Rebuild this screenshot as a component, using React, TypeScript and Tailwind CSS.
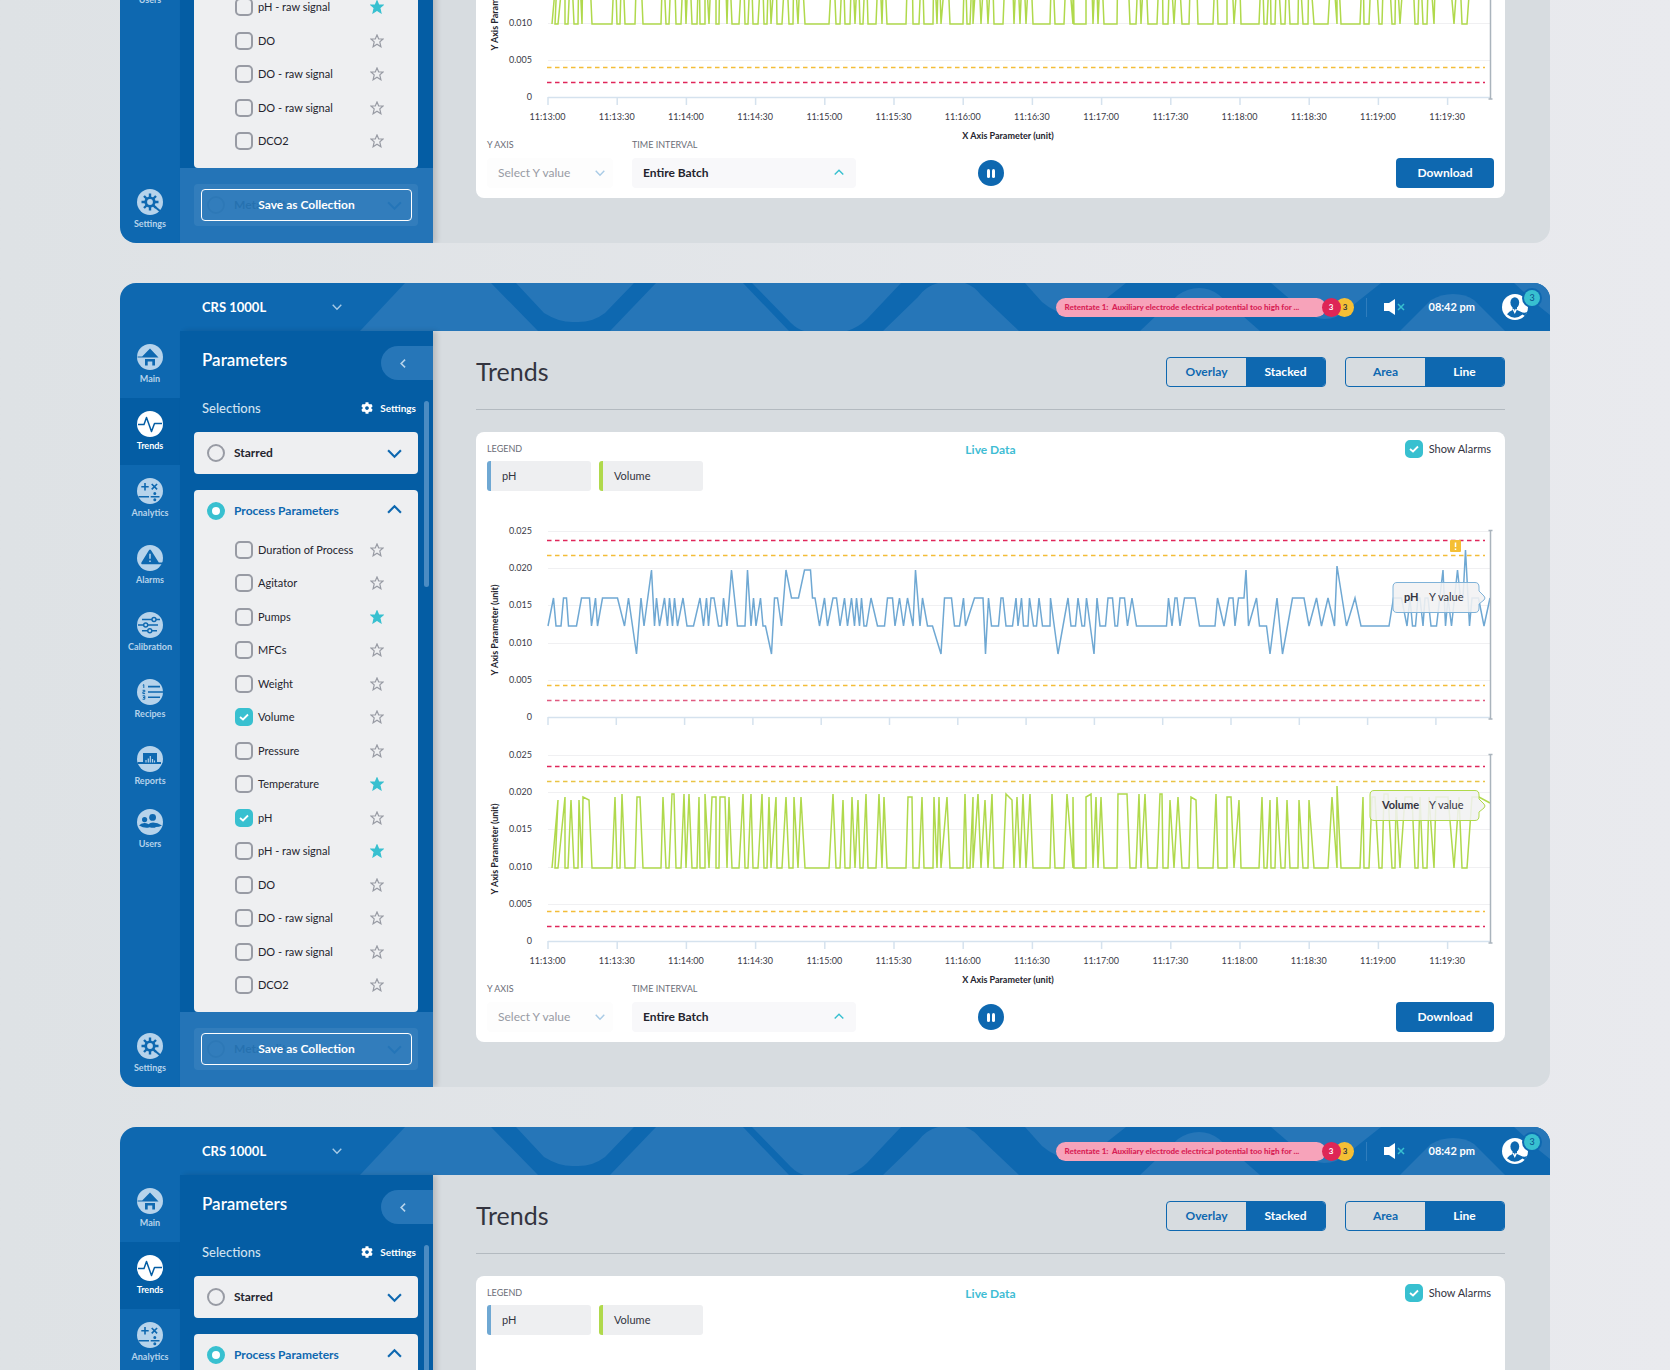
import { useId, useState } from 'react';
import type { ReactNode } from 'react';
import { FaCog } from 'react-icons/fa';

interface NavItem {
  label: string;
  icon: ReactNode;
}

interface ChartProps {
  color: string;
  data: string;
  levels: Record<string, number>;
  limits: { y: number; color: string }[];
  tickGap: number;
  titleY: number;
  labels?: string[];
  children?: ReactNode;
}

const parameters = [
  'Duration of Process',
  'Agitator',
  'Pumps',
  'MFCs',
  'Weight',
  'Volume',
  'Pressure',
  'Temperature',
  'pH',
  'pH - raw signal',
  'DO',
  'DO - raw signal',
  'DO - raw signal',
  'DCO2',
];
const initialChecked = [5, 8];
const initialStarred = [2, 7, 9];

const times = [
  '11:13:00', '11:13:30', '11:14:00', '11:14:30', '11:15:00', '11:15:30', '11:16:00',
  '11:16:30', '11:17:00', '11:17:30', '11:18:00', '11:18:30', '11:19:00', '11:19:30',
];

// Every sample is a level letter followed by its x offset in the plot
const phLevels = { X: 19, S: 35, P: 39, H: 67, L: 95, T: 123 };
const phData =
  'L0 H5.5 L8 L13 H15.5 H18.5 L20.5 L28.5 H33.5 H41.5 L43.5 H47.5 L49.5 H54.5 H69.5 L76.5 H80.5 T88.5 H93 L96 P103.5 L106.5 H108.5 L111.5 H116.5 L119.5 H121.5 L124.5 H126.5 L129.5 H135 L139 L145.5 H152 L155.5 H158.5 L160.5 H163 H166 L170.5 L173.5 H175.5 L179 P183.5 L189.5 L197 P199.5 L203 H205.5 L208 H212.5 L215 L217.5 T223.5 H226.5 H229.5 L233.5 P238 H243.5 H250.5 P256.5 P262.5 H264.5 H267 L271.5 H276.5 L279.5 H285 H288.5 L292 H296.5 L299.5 H303.5 L306.5 H308.5 L311.5 H313.5 L316 L318.5 H323 L329.5 L336.5 H339.5 H344.5 L347 H351.5 L355.5 H359.5 L365 P367.5 L372 H374.5 L379.5 L384.5 T393 H396.5 H403.5 L406.5 L411.5 H415.5 L417.5 H426.5 H435 T437.5 H440.5 ' +
  'L443.5 L450.5 H453 H455 L458 L464.5 H468 L470 H473.5 L475.5 L480 H481.5 L485.5 L488.5 H491 L494.5 L502 H502.5 T510 H520 L523 L527.5 H530 L534 L536.5 H538.5 T546 H549 L552 L557.5 H560 H564.5 L567 L569.5 H572 H576.5 L579.5 H584 L588.5 L618.5 H620.5 L624 H627 H629 L632 H636.5 H647 L651.5 L667 H669.5 L676 H681 H685 L687 H690.5 H696 P698 L700.5 H708.5 L711.5 L718.5 T722 H729 T734.5 H744.5 H756 L761 H768.5 L773.5 H780 L786.5 S789 L798.5 H807 L813 L841 H845.5 H853.5 L859 H862 L864.5 L867.5 H870 H872 L875 H877 H880 L883 L888.5 P895 L897.5 H900 L903.5 P909.5 H912.5 H915 X917.5 L921.5 H924 H930.5 L936 H942';

const volumeLevels = { X: 31, C: 39, A: 42, D: 45, F: 48, B: 113 };
const volumeData =
  'B4 D10 B7 B10 A17 B17 B20 D23 B26 B30 D31 B34 A35 D41 B44 B64 A67 B69 B72 C74 B77 B87 A89 A92 B95 B113 A115 B118 B121 C124 C126 B128 B133 C136 B138 C141 B144 B149 A151 B152 B157 C157 B161 A164 A168 B168 B171 A172 A177 B179 A181 B184 B191 C195 B197 B200 C203 B205 B210 C214 B216 B219 A221 B223 A228 B229 B234 A238 B241 B245 A246 B250 A253 B257 B281 C285 B288 B292 D295 B297 B302 A304 B307 D310 B312 B315 C318 B320 B328 C331 B334 A336 B339 B358 A360 A364 B365 B371 A374 B376 B385 A386 B389 A391 B393 A399 B402 B415 C417 B419 B422 A425 B425 C430 B433 D437 B440 ' +
  'C444 B446 B455 C458 D464 B466 A469 B472 C475 B478 C482 B485 B502 C504 B507 B516 C519 B525 A525 B526 B538 A538 C543 B545 A548 B550 A553 B556 B569 C570 C579 B582 B588 C591 B593 C597 B600 B609 C612 C614 B615 B620 D622 B626 A630 B634 B641 A643 D648 B650 B665 C668 B670 B679 A679 A683 B686 D691 B693 B711 A714 B716 B719 D722 B723 B727 A729 B733 B737 D739 B742 B750 D751 B755 B760 D761 B766 B780 A784 B789 X789 B793 B812 A815 B816 B821 A824 A827 B831 B834 C836 C840 B844 B847 A848 B852 A857 A864 B867 B870 A872 B875 B879 A881 B886 A888 A900 B906 A911 B914 B919 A924 A931 F942';

const RED = '#e0265a';
const ROSE = '#e05a80';
const AMBER = '#f3bd38';

const navItems: NavItem[] = [
  {
    label: 'Main',
    icon: (
      <>
        <path d="M13 4.5 21.5 13.5H0.5V12.6H5.2Z" fill="var(--glyph)" />
        <path d="M8 15H18V21.5H15.3V17.6H10.7V21.5H8Z" fill="var(--glyph)" />
      </>
    ),
  },
  {
    label: 'Trends',
    icon: <path d="M1 13.5H7L9.5 6.5 14.5 20.5 17.5 12.5H25" fill="none" stroke="var(--glyph)" strokeWidth="1.5" strokeLinejoin="round" />,
  },
  {
    label: 'Analytics',
    icon: (
      <g stroke="var(--glyph)" strokeWidth="1.6" fill="none">
        <path d="M8 5V12.4M4.3 8.7H11.7M14.7 6 20.1 11.4M20.1 6 14.7 11.4M1.5 18.7H12M13.7 18.7H22.5" />
        <circle cx="17.8" cy="15.6" r="0.7" />
        <circle cx="17.8" cy="21.8" r="0.7" />
      </g>
    ),
  },
  {
    label: 'Alarms',
    icon: (
      <>
        <path d="M12.1 5Q13 3.8 13.9 5L21.8 17.6H26V19.2H4.8Q3.8 18.8 4.4 17.6Z" fill="var(--glyph)" />
        <path d="M13 8.8V13.8M13 15.4V17" stroke="currentColor" strokeWidth="1.5" />
      </>
    ),
  },
  {
    label: 'Calibration',
    icon: (
      <g stroke="var(--glyph)" strokeWidth="1.4" fill="currentColor">
        <path d="M5 7.5H23M1 13H21M5 18.7H20" />
        <circle cx="17" cy="7.5" r="2" />
        <circle cx="8.7" cy="13" r="2" />
        <circle cx="12.8" cy="18.7" r="2" />
      </g>
    ),
  },
  {
    label: 'Recipes',
    icon: (
      <>
        <path d="M11 7.6H23M11 13H26M11 18.3H23" stroke="var(--glyph)" strokeWidth="1.6" />
        <path
          d="M5.8 6.2 6.8 5.6V9M5.6 11.3H7.8V12.8H5.9V14.6H8.1M5.6 16.8H7.8V20.2H5.6M6 18.5H7.8"
          fill="none"
          stroke="var(--glyph)"
          strokeWidth="1"
        />
      </>
    ),
  },
  {
    label: 'Reports',
    icon: (
      <>
        <path d="M6 7H20V16H24V18H0.5V16H6Z" fill="var(--glyph)" />
        <path d="M9 16.5V14M11.3 16.5V12.5M13.3 16.5V10M15.5 16.5V13M17.5 16.5V14.5" stroke="currentColor" strokeWidth="1.2" />
      </>
    ),
  },
  {
    label: 'Users',
    icon: (
      <g fill="var(--glyph)">
        <circle cx="7.6" cy="10.6" r="2.6" />
        <circle cx="15.6" cy="8.4" r="3.4" />
        <path d="M2 16.5Q4 13.8 8 14 10.5 14.3 11.5 15.3 13 13.4 16 13.4 20.5 13.5 25 16.5 22 18 19 18 17 19.6 12.5 18.2 8 19.8 2 16.5Z" />
      </g>
    ),
  },
];

const gearIcon = (
  <>
    <path
      d="M13 4.5V21.5M4.5 13H21.5M7 7 19 19M19 7 7 19"
      stroke="var(--glyph)"
      strokeWidth="2.4"
    />
    <circle cx="13" cy="13" r="5.6" fill="var(--glyph)" />
    <path d="M17 17 23.5 22.5" stroke="var(--glyph)" strokeWidth="2" />
    <circle cx="13" cy="13" r="2.9" fill="currentColor" />
  </>
);

function Chevron({ direction, className }: { direction: 'up' | 'down' | 'left'; className: string }) {
  const paths = { up: 'M1 9 7 3 13 9', down: 'M1 4 7 10 13 4', left: 'M9 2 4 7 9 12' };
  return (
    <svg viewBox="0 0 14 14" className={className} fill="none" stroke="currentColor" strokeWidth="2" aria-hidden="true">
      <path d={paths[direction]} />
    </svg>
  );
}

function NavLink({ item, active }: { item: NavItem; active?: boolean }) {
  return (
    <a
      href="#"
      className={
        active
          ? 'flex h-[67px] flex-col items-center bg-[#045da4] pt-[13px] text-white [--glyph:#045da4]'
          : 'flex h-[67px] flex-col items-center pt-[13px] text-[#b6d3eb] [--glyph:#0e68b0]'
      }
    >
      <svg viewBox="0 0 26 26" className="size-[26px]" aria-hidden="true">
        <circle cx="13" cy="13" r="13" fill="currentColor" />
        {item.icon}
      </svg>
      <span className="mt-[3px] text-[9px] leading-3 font-bold">{item.label}</span>
    </a>
  );
}

function Checkbox({ checked, onChange }: { checked: boolean; onChange: () => void }) {
  return (
    <span className="relative size-[18px] shrink-0">
      <input
        type="checkbox"
        checked={checked}
        onChange={onChange}
        className="block size-[18px] appearance-none rounded-[5px] border-2 border-[#989ba4] checked:border-[#38c0d0] checked:bg-[#38c0d0]"
      />
      {checked && (
        <svg viewBox="0 0 18 18" className="pointer-events-none absolute inset-0" fill="none" stroke="white" strokeWidth="1.8" aria-hidden="true">
          <path d="M5 9 8 11.5 13 6.5" />
        </svg>
      )}
    </span>
  );
}

function Radio({ name, checked, onChange }: { name: string; checked?: boolean; onChange?: () => void }) {
  return (
    <input
      type="radio"
      name={name}
      checked={checked}
      onChange={onChange}
      className="size-[18px] shrink-0 appearance-none rounded-full border-2 border-[#989ba4] checked:border-[5px] checked:border-[#38c0d0] checked:bg-white"
    />
  );
}

function Header() {
  return (
    <header className="relative flex h-12 items-center justify-between bg-[#0e68b0] pl-[82px]">
      <svg viewBox="0 0 1430 48" preserveAspectRatio="xMidYMid slice" className="absolute inset-0 h-full w-full" fill="#2676b8" aria-hidden="true">
        <path d="M240 48 285 0H371L418 48Z" />
        <path d="M396 0 424 30Q440 40 455 39 472 40 485 30L514 0Z" />
        <path d="M490 48 536 0H623L669 48Z" />
        <path d="M632 0 671 40Q677 46 684 48H727Q739 44 747 36L781 0Z" />
        <path d="M763 48 798 14Q806 3 818 0H845Q854 3 861 12L899 48Z" />
        <path d="M905 0 922 19Q936 31 950 31 964 31 978 22L1006 0Z" />
        <path d="M1020 48 1058 12Q1068 5 1079 5 1090 5 1099 12L1140 48Z" />
        <path d="M1151 0 1179 24Q1192 36 1204 36 1217 36 1227 27L1261 0Z" />
        <path d="M1280 48 1311 17Q1321 11 1333 11 1346 11 1354 17L1385 48Z" />
        <path d="M1394 0 1420 24 1430 32V0Z" />
      </svg>
      <button type="button" className="relative flex w-[140px] items-center justify-between text-[13px] leading-5 font-bold text-white">
        CRS 1000L
        <Chevron direction="down" className="size-[10px] text-[#a6cae6]" />
      </button>
      <div className="relative flex items-center pr-[22px]">
        <div className="flex h-[19px] items-center rounded-full bg-[#f7a3ba] pl-[9px]">
          <span className="w-[261px] text-[8px] leading-3 font-black whitespace-pre text-[#d81e55]">
            Retentate 1:  Auxiliary electrode electrical potential too high for ...
          </span>
        </div>
        <span className="relative z-10 -ml-1 flex size-[19px] items-center justify-center rounded-full bg-[#de2656] text-[8px] font-bold text-white">
          3
        </span>
        <span className="-ml-1.5 flex size-[19px] items-center justify-center rounded-full bg-[#f5bf35] pl-0.5 text-[8px] font-bold text-[#33333d]">
          3
        </span>
        <span className="ml-3 h-[19px] w-px bg-[#2f7dbd]" />
        <button type="button" aria-label="Mute" className="ml-[17px]">
          <svg viewBox="0 0 21 16" className="h-4 w-[21px]" aria-hidden="true">
            <path d="M0 4H5L11 0V16L5 12H0Z" fill="white" />
            <path d="M14 5 20 11M20 5 14 11" stroke="#38c0d0" strokeWidth="1.5" />
          </svg>
        </button>
        <span className="ml-[24px] text-[11px] leading-4 font-bold text-white">08:42 pm</span>
        <button type="button" aria-label="Account" className="relative ml-[27px]">
          <svg viewBox="0 0 26 26" className="block size-[26px]" aria-hidden="true">
            <circle cx="13" cy="13" r="13" fill="white" />
            <ellipse cx="12.8" cy="8.6" rx="4.4" ry="5.4" fill="#0e68b0" />
            <path d="M10.6 12.5H15V16L20.5 18.5Q25 19 25.5 17.5L23 22 20.5 20.4Q12.5 27 5 20.2 7 17.4 10.6 16Z" fill="#0e68b0" />
            <path d="M10.6 15.5 12.8 20 15 15.5 13.6 14.8 12.8 17 12 14.8Z" fill="white" />
          </svg>
          <span className="absolute -top-1 -right-3 flex size-4 items-center justify-center rounded-full bg-[#38c0d0] text-[9px] text-[#0b4f8c] ring-2 ring-[#0e68b0]">
            3
          </span>
        </button>
      </div>
    </header>
  );
}

function Sidebar() {
  const name = useId();
  const [checked, setChecked] = useState(initialChecked);
  const [starred, setStarred] = useState(initialStarred);

  const toggle = (list: number[], i: number) => (list.includes(i) ? list.filter((n) => n !== i) : [...list, i]);

  return (
    <aside className="relative w-[253px] shrink-0 bg-[#045da4] pr-[15px] pb-[17px] pl-[14px] shadow-[4px_0_5px_rgba(0,0,0,0.14)]">
      <div className="mt-[15px] -mr-[15px] flex h-[34px] items-center justify-between pl-2">
        <h2 className="pb-1.5 text-[17px] leading-5 font-semibold text-white">Parameters</h2>
        <button type="button" aria-label="Collapse panel" className="flex h-full w-[52px] items-center rounded-l-full bg-[#2676b8] pl-[17px] text-[#b6d3eb]">
          <Chevron direction="left" className="size-[11px]" />
        </button>
      </div>
      <div className="mt-[18px] flex h-5 items-center justify-between pr-0.5 pl-2">
        <h3 className="text-[13px] leading-5 font-medium text-[#cfe1f0]">Selections</h3>
        <button type="button" className="flex items-center gap-[7px] text-[10px] leading-4 font-bold text-white">
          <FaCog className="size-[12px]" />
          Settings
        </button>
      </div>
      <span className="absolute top-[70px] right-1 h-[186px] w-[5px] rounded-full bg-[#4b8cc3]" />

      <div className="mt-[14px] flex h-[42px] items-center rounded bg-[#eeeff1] pr-4 pl-[13px] text-[#24242e]">
        <label className="flex flex-1 items-center gap-[9px] text-xs leading-5 font-bold">
          <Radio name={name} />
          Starred
        </label>
        <Chevron direction="down" className="size-[15px] text-[#0e68b0]" />
      </div>

      <div className="mt-4 rounded bg-[#eeeff1] pb-[10px]">
        <div className="mb-[2px] flex h-[41px] items-center pr-4 pl-[13px]">
          <label className="flex flex-1 items-center gap-[9px] text-xs leading-5 font-bold text-[#0e68b0]">
            <Radio name={name} checked onChange={() => {}} />
            Process Parameters
          </label>
          <Chevron direction="up" className="size-[15px] text-[#0e68b0]" />
        </div>
        <ul className="grid h-[469px] auto-rows-fr pr-[34px] pl-[41px]">
          {parameters.map((parameter, i) => (
            <li key={i} className="flex items-center justify-between">
              <label className="flex items-center gap-[5px] text-[11px] leading-4 text-[#24242e]">
                <Checkbox checked={checked.includes(i)} onChange={() => setChecked(toggle(checked, i))} />
                {parameter}
              </label>
              <button
                type="button"
                aria-label={`Star ${parameter}`}
                onClick={() => setStarred(toggle(starred, i))}
                className={starred.includes(i) ? 'fill-[#38c0d0] text-[#38c0d0]' : 'fill-none text-[#989ba4]'}
              >
                <svg viewBox="0 0 14 14" className="block size-[14px]" stroke="currentColor" strokeWidth="1.2" aria-hidden="true">
                  <path d="M7 1 8.7 5H13L9.8 7.9 10.9 12.8 7 10.3 3.1 12.8 4.2 7.9 1 5H5.3Z" />
                </svg>
              </button>
            </li>
          ))}
        </ul>
      </div>

      <div className="mt-4 flex h-[42px] items-center rounded bg-[#eeeff1] pr-4 pl-[13px] text-[#24242e]">
        <label className="flex flex-1 items-center gap-[9px] text-xs leading-5 font-bold">
          <Radio name={name} />
          Metabolites
        </label>
        <Chevron direction="down" className="size-[15px] text-[#0e68b0]" />
      </div>

      {/* Footer slides over the list */}
      <div className="absolute inset-x-0 bottom-0 h-[75px] bg-[#2676b8]/94 px-[21px] pt-[21px]">
        <button type="button" className="h-8 w-full rounded border border-white text-xs leading-5 font-bold text-white">
          Save as Collection
        </button>
      </div>
    </aside>
  );
}

function Toggle({ options, initial }: { options: string[]; initial: string }) {
  const [value, setValue] = useState(initial);
  return (
    <div className="flex h-[30px] w-[160px] overflow-hidden rounded border border-[#0e68b0]">
      {options.map((option) => (
        <button
          key={option}
          type="button"
          aria-pressed={option === value}
          onClick={() => setValue(option)}
          className={
            option === value
              ? 'flex-1 bg-[#0e68b0] text-xs leading-5 font-bold text-white'
              : 'flex-1 text-xs leading-5 font-bold text-[#0e68b0]'
          }
        >
          {option}
        </button>
      ))}
    </div>
  );
}

function Chart({ color, data, levels, limits, tickGap, titleY, labels, children }: ChartProps) {
  const points = data
    .split(' ')
    .map((p) => `${72 + Number(p.slice(1))},${10 + levels[p[0]]}`)
    .join(' ');

  return (
    <svg viewBox={labels ? '0 0 1029 237' : '0 0 1029 224'} className="block w-full overflow-visible text-[9px]">
      {['0.025', '0.020', '0.015', '0.010', '0.005', '0'].map((value, i) => (
        <g key={value}>
          <text x="56" y={13 + i * 37.2} textAnchor="end" fill="#3a3b47">
            {value}
          </text>
          <path d={`M72 ${10.5 + Math.round(i * 37.2)}H1014`} stroke={i === 5 ? '#d5e2ee' : '#f0f0f2'} strokeWidth={i === 5 ? 1.5 : 1} />
        </g>
      ))}
      {times.map((time, i) => (
        <g key={time}>
          <path d={`M${72 + i * tickGap} 196v8`} stroke="#d5e2ee" strokeWidth="1.5" />
          {labels && (
            <text x={71.5 + i * tickGap} y="219" textAnchor="middle" fill="#3a3b47">
              {time}
            </text>
          )}
        </g>
      ))}
      <text transform={`rotate(-90 22 ${titleY})`} x="22" y={titleY} textAnchor="middle" className="font-bold" fill="#24242e">
        Y Axis Parameter (unit)
      </text>
      {labels && (
        <text x="532" y="238" textAnchor="middle" className="font-bold" fill="#24242e">
          X Axis Parameter (unit)
        </text>
      )}
      {limits.map((limit) => (
        <path key={limit.y} d={`M71 ${limit.y}H1009`} stroke={limit.color} strokeWidth="1.5" strokeDasharray="4.5 3.5" />
      ))}
      <polyline points={points} fill="none" stroke={color} strokeWidth="1.5" />
      <path d="M1014.5 9V198M1012.5 9.5H1016.5M1012.5 198H1016.5" stroke="#aab4bd" strokeWidth="1.5" />
      {children}
    </svg>
  );
}

function TrendsCard() {
  const id = useId();
  const [alarms, setAlarms] = useState(true);

  return (
    <section className="mt-[22px] rounded-lg bg-white px-[11px] pt-2 pb-[10px]">
      <div className="grid grid-cols-3 items-start">
        <div>
          <h2 className="text-[9px] leading-[17px] text-[#6b6d78]">LEGEND</h2>
          <ul className="mt-1 flex gap-2 text-[11px] leading-[30px] text-[#33343f]">
            <li className="w-[104px] rounded-[3px] border-l-4 border-[#6fa8d3] bg-[#eeeff1] pl-[11px]">pH</li>
            <li className="w-[104px] rounded-[3px] border-l-4 border-[#b0d94c] bg-[#eeeff1] pl-[11px]">Volume</li>
          </ul>
        </div>
        <p className="text-center text-xs leading-5 font-bold text-[#3fbdd4]">Live Data</p>
        <label className="flex items-center gap-[6px] justify-self-end pr-[3px] text-[11px] leading-[18px] text-[#33343f]">
          <Checkbox checked={alarms} onChange={() => setAlarms(!alarms)} />
          Show Alarms
        </label>
      </div>

      <div className="-mx-[11px] mt-[30px]">
        <Chart
          color="#6fa8d3"
          data={phData}
          levels={phLevels}
          tickGap={68.3}
          titleY={109}
          limits={[
            { y: 19.5, color: RED },
            { y: 34.5, color: AMBER },
            { y: 164.5, color: AMBER },
            { y: 179.5, color: ROSE },
          ]}
        >
          {alarms && (
            <g>
              <rect x="974" y="19" width="11" height="12" rx="1" fill="#f5bf35" />
              <path d="M979.5 21.5V26M979.5 27.5V29" stroke="white" strokeWidth="1.5" />
            </g>
          )}
          <path
            d="M921 61.5H999Q1003 61.5 1003 66V70L1008 75Q1010 77 1008 79L1003 83V87Q1003 91.5 999 91.5H921Q917 91.5 917 87V66Q917 61.5 921 61.5Z"
            fill="#f1f1f2"
            fillOpacity="0.88"
            stroke="#7fb2d8"
          />
          <g className="text-[11px]" fill="#33343f">
            <text x="928" y="80" className="font-bold">pH</text>
            <text x="953" y="80">Y value</text>
          </g>
        </Chart>
        <Chart
          color="#b0d94c"
          data={volumeData}
          levels={volumeLevels}
          tickGap={69.2}
          titleY={104}
          labels={times}
          limits={[
            { y: 21.5, color: RED },
            { y: 36.5, color: '#e9c445' },
            { y: 166.5, color: AMBER },
            { y: 181.5, color: RED },
          ]}
        >
          <path
            d="M898 45.5H999Q1003 45.5 1003 50V54L1008 59Q1010 61 1008 63L1003 67V71Q1003 75.5 999 75.5H898Q894 75.5 894 71V50Q894 45.5 898 45.5Z"
            fill="#f1f1f2"
            fillOpacity="0.88"
            stroke="#b0d94c"
          />
          <g className="text-[11px]" fill="#33343f">
            <text x="906" y="64" className="font-bold">Volume</text>
            <text x="953" y="64">Y value</text>
          </g>
        </Chart>
      </div>

      <div className="grid grid-cols-[1fr_auto_1fr] items-end">
        <div className="flex gap-[19px]">
          <div className="w-[126px]">
            <label htmlFor={`${id}-y`} className="block text-[9px] leading-[13px] text-[#6b6d78]">Y AXIS</label>
            <div className="relative mt-[7px]">
              <select
                id={`${id}-y`}
                disabled
                className="h-[30px] w-full appearance-none rounded bg-[#fdfdfd] pl-[11px] text-xs leading-5 text-[#989ba4] opacity-100"
              >
                <option>Select Y value</option>
              </select>
              <Chevron direction="down" className="pointer-events-none absolute top-[10px] right-2 size-[10px] text-[#a9cbe6]" />
            </div>
          </div>
          <div className="w-[224px]">
            <label htmlFor={`${id}-time`} className="block text-[9px] leading-[13px] text-[#6b6d78]">TIME INTERVAL</label>
            <div className="relative mt-[7px]">
              <select
                id={`${id}-time`}
                className="h-[30px] w-full appearance-none rounded bg-[#f8f8fa] pl-[11px] text-xs leading-5 font-bold text-[#24242e]"
              >
                <option>Entire Batch</option>
              </select>
              <Chevron direction="up" className="pointer-events-none absolute top-[10px] right-3 size-[10px] text-[#38c0d0]" />
            </div>
          </div>
        </div>
        <button type="button" aria-label="Pause" className="mb-0.5 flex size-[26px] items-center justify-center gap-[2px] rounded-full bg-[#0e68b0]">
          <span className="h-[9px] w-[3px] rounded-xs bg-white" />
          <span className="h-[9px] w-[3px] rounded-xs bg-white" />
        </button>
        <button type="button" className="h-[30px] w-[98px] justify-self-end rounded bg-[#0e68b0] text-xs leading-5 font-bold text-white">
          Download
        </button>
      </div>
    </section>
  );
}

function TrendsScreen() {
  return (
    <div className="shrink-0 overflow-hidden rounded-2xl bg-[#d7dce0]">
      <Header />
      <div className="flex">
        <nav className="flex w-[60px] shrink-0 flex-col justify-between bg-[#0e68b0]">
          <div className="[&>:last-child]:-mt-1">
            {navItems.map((item, i) => (
              <NavLink key={item.label} item={item} active={i === 1} />
            ))}
          </div>
          <NavLink item={{ label: 'Settings', icon: gearIcon }} />
        </nav>
        <Sidebar />
        <main className="min-w-0 flex-1 pt-[26px] pr-[45px] pb-[45px] pl-[43px]">
          <div className="flex items-start justify-between border-b border-[#b3bac0] pb-[22px]">
            <h1 className="text-[25px] leading-7 text-[#33343f]">Trends</h1>
            <div className="flex gap-[19px]">
              <Toggle options={['Overlay', 'Stacked']} initial="Stacked" />
              <Toggle options={['Area', 'Line']} initial="Line" />
            </div>
          </div>
          <TrendsCard />
        </main>
      </div>
    </div>
  );
}

export default function App() {
  return (
    <div className="flex h-screen flex-col justify-center gap-10 overflow-hidden bg-linear-to-r from-[#dee2e5] to-[#e9eaee] px-[120px] font-['Lato',sans-serif]">
      <TrendsScreen />
      <TrendsScreen />
      <TrendsScreen />
    </div>
  );
}
